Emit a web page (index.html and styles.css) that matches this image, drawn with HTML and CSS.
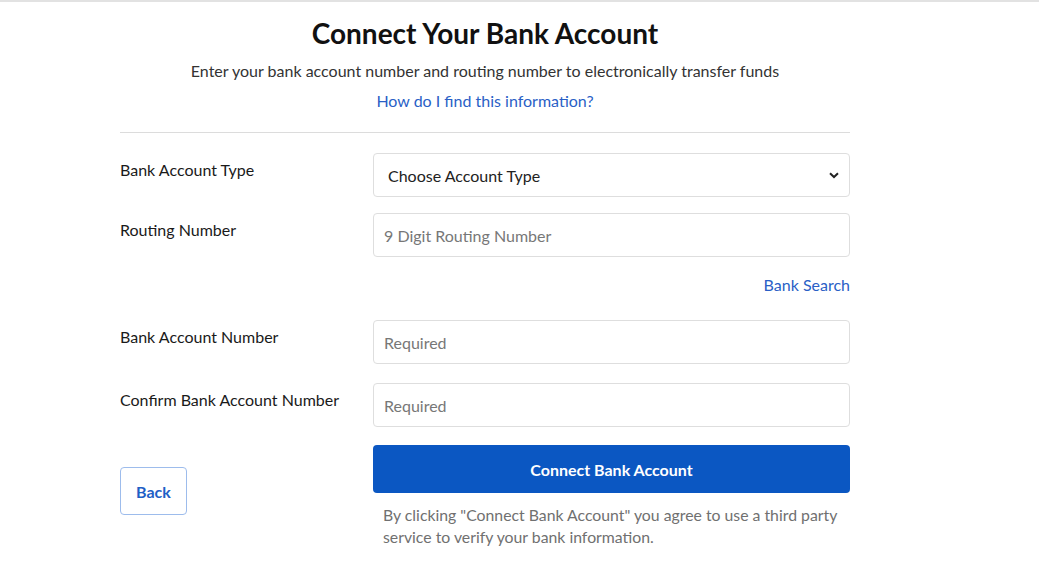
FILE: index.html
```html
<!DOCTYPE html>
<html>
<head>
<meta charset="utf-8">
<link rel="stylesheet" href="styles.css">
</head>
<body>
<div class="topline"></div>
<main class="page">
  <header class="intro">
    <h1 class="title">Connect Your Bank Account</h1>
    <p class="subtitle">Enter your bank account number and routing number to electronically transfer funds</p>
    <a class="link help" href="#">How do I find this information?</a>
  </header>
  <form class="form">
    <div class="row row-type">
      <label class="label">Bank Account Type</label>
      <div class="field">
        <div class="select">
          <span>Choose Account Type</span>
          <svg class="chev" width="10" height="7" viewBox="0 0 10 7"><path d="M1 1.2 L5 5 L9 1.2" fill="none" stroke="#222" stroke-width="2"/></svg>
        </div>
      </div>
    </div>
    <div class="row row-routing">
      <label class="label">Routing Number</label>
      <div class="field">
        <div class="input">9 Digit Routing Number</div>
        <div class="search-wrap"><a class="link" href="#">Bank Search</a></div>
      </div>
    </div>
    <div class="row row-acct">
      <label class="label">Bank Account Number</label>
      <div class="field"><div class="input">Required</div></div>
    </div>
    <div class="row row-confirm">
      <label class="label">Confirm Bank Account Number</label>
      <div class="field"><div class="input">Required</div></div>
    </div>
    <div class="row actions">
      <div class="back-col"><button type="button" class="back">Back</button></div>
      <div class="field">
        <button type="button" class="primary">Connect Bank Account</button>
        <p class="disclaimer">By clicking "Connect Bank Account" you agree to use a third party service to verify your bank information.</p>
      </div>
    </div>
  </form>
</main>
</body>
</html>
```
FILE: styles.css
```css
html, body { margin: 0; padding: 0; background: #fff; }
body { font-family: Lato, "Liberation Sans", sans-serif; color: #1a1a1a; }
.topline { height: 2px; background: #e2e2e2; }
.page { width: 730px; margin-left: 120px; }
.intro { text-align: center; border-bottom: 1px solid #dcdcdc; padding-bottom: 22px; }
.title { margin: 0; padding-top: 16px; font-size: 28px; font-weight: 700; line-height: 30px; color: #111; }
.subtitle { margin: 14px 0 0; font-size: 16px; line-height: 18px; color: #333; }
.link { color: #2a5fc6; text-decoration: none; font-size: 16px; }
.help { display: inline-block; margin-top: 12px; line-height: 18px; }
.form { padding-top: 20px; }
.row { display: flex; }
.row-type { margin-bottom: 16px; }
.row-routing { margin-bottom: 26px; }
.row-acct { margin-bottom: 19px; }
.row-confirm { margin-bottom: 18px; }
.label { width: 253px; flex: none; font-size: 16px; line-height: 18px; padding-top: 8px; color: #1a1a1a; }
.field { flex: 1; }
.select, .input { box-sizing: border-box; height: 44px; border: 1px solid #dedede; border-radius: 4px; display: flex; align-items: center; font-size: 16px; }
.select { padding: 0 10px 0 14px; justify-content: space-between; color: #222; }
.input { padding: 0 10px; color: #777; }
.search-wrap { text-align: right; padding-top: 19px; line-height: 18px; }
.back-col { width: 253px; flex: none; padding-top: 22px; }
.back { box-sizing: border-box; width: 67px; height: 48px; border: 1px solid #9dbcec; border-radius: 4px; background: #fff; color: #1f5fc6; font-family: inherit; font-size: 16px; font-weight: 700; padding: 0; }
.primary { box-sizing: border-box; width: 100%; height: 48px; border: none; border-radius: 4px; background: #0b57c2; color: #fff; font-family: inherit; font-size: 16px; font-weight: 700; }
.disclaimer { margin: 11px 0 0; padding: 0 0 0 10px; font-size: 15.8px; line-height: 22px; color: #707070; }
```
